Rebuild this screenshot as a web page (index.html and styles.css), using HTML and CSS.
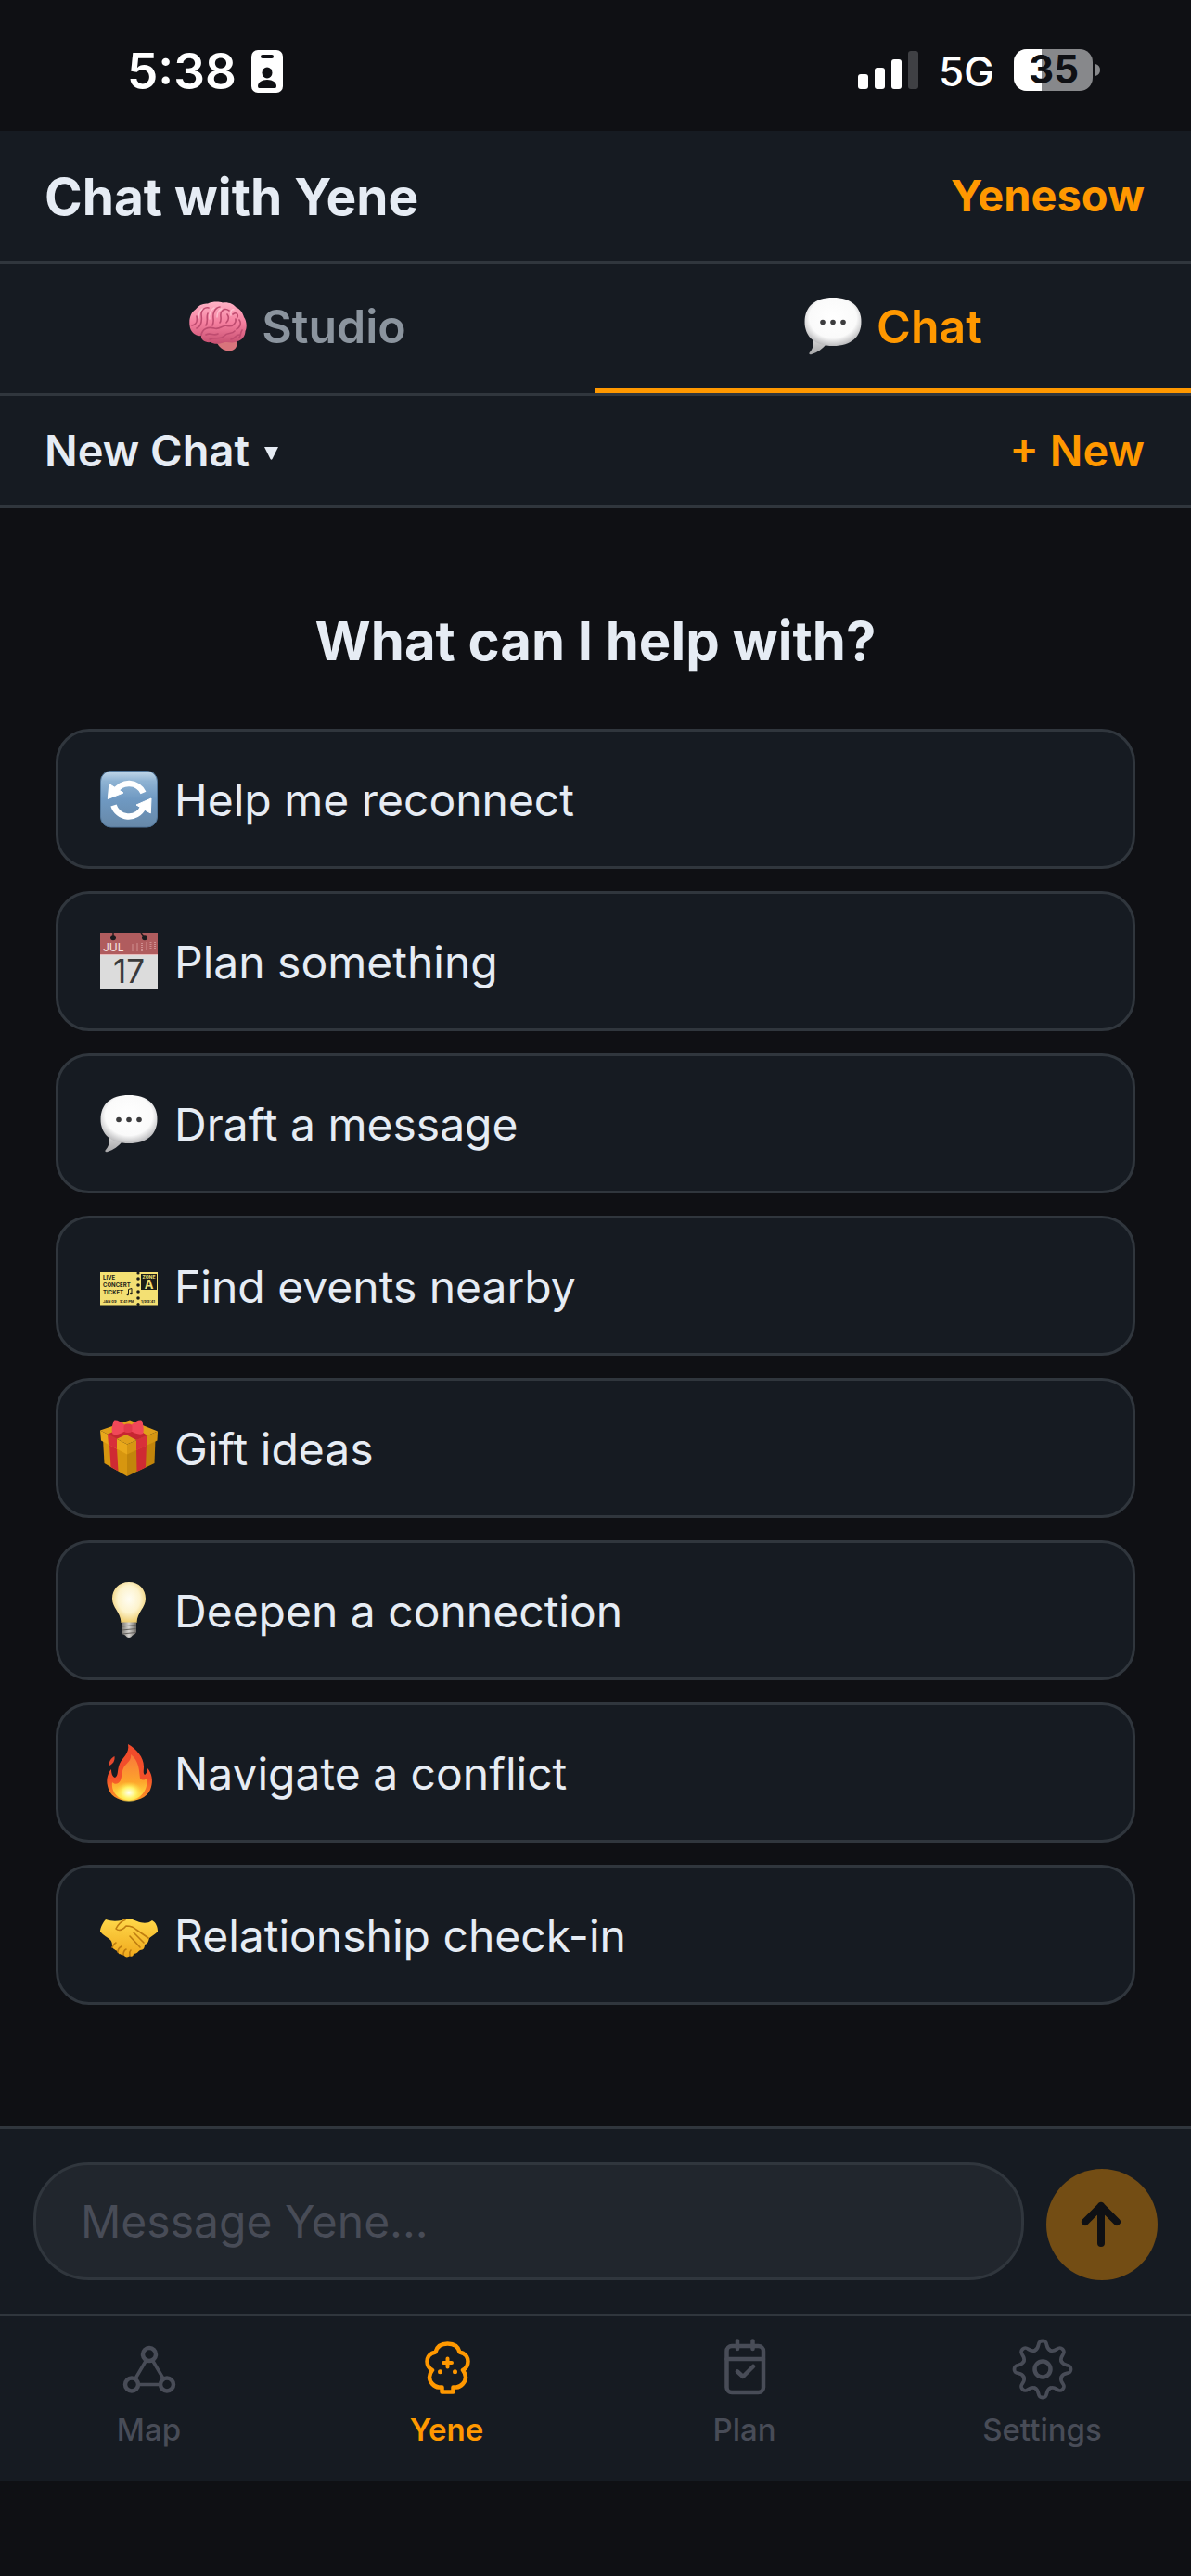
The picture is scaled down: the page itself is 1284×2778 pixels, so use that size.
FILE: index.html
```html
<!DOCTYPE html>
<html lang="en">
<head>
<meta charset="utf-8">
<meta name="viewport" content="width=device-width, initial-scale=1">
<title>Chat with Yene</title>
<link rel="stylesheet" href="styles.css">
</head>
<body>
<svg class="defs" aria-hidden="true">
  <defs>
    <radialGradient id="bubbleFill" cx="50%" cy="42%" r="58%">
      <stop offset="0" stop-color="#ffffff"/><stop offset=".72" stop-color="#fafafa"/><stop offset="1" stop-color="#bdbdbf"/>
    </radialGradient>
    <linearGradient id="tailFill" x1="0" y1="0" x2="0" y2="1">
      <stop offset="0" stop-color="#dadada"/><stop offset="1" stop-color="#a6a6a8"/>
    </linearGradient>
    <symbol id="bubble" viewBox="0 0 62 62">
      <path d="M9 43 C11 51 9 56 5.500 59.500 C5 61 6 61.500 8 61 C14 59 20 55 24 50 Z" fill="url(#tailFill)"/>
      <path d="M31 0 C51 0 61.500 10 61.500 26 C61.500 42 51 52 31 52 C11 52 .5 42 .5 26 C.5 10 11 0 31 0 Z" fill="url(#bubbleFill)"/>
      <g fill="#3c3c3e"><circle cx="20" cy="26.500" r="2.800"/><circle cx="31" cy="26.500" r="2.800"/><circle cx="42" cy="26.500" r="2.800"/></g>
    </symbol>
  </defs>
</svg>
<div class="app">
  <div class="status">
    <div class="status-side">
      <span class="clock">5:38</span>
      <svg width="34" height="46" viewBox="0 0 34 46" aria-hidden="true">
        <rect width="34" height="46" rx="7" fill="#fff"/>
        <rect x="10" y="5" width="14" height="4" rx="2" fill="#0f1014"/>
        <ellipse cx="17" cy="24.500" rx="5.500" ry="6" fill="#0f1014"/>
        <path d="M7 39 C7 35 11 32 17 32 C23 32 27 35 27 39 Q27 41 25.500 41 H8.500 Q7 41 7 39 Z" fill="#0f1014"/>
      </svg>
    </div>
    <div class="status-side status-right">
      <svg width="66" height="46" viewBox="0 0 66 46" aria-hidden="true">
        <g fill="#fff"><rect y="26" width="11" height="16" rx="3"/><rect x="18" y="19" width="11" height="23" rx="3"/><rect x="36" y="10" width="11" height="32" rx="3"/></g>
        <rect x="54" y="1" width="11" height="41" rx="3" fill="#3f4044"/>
      </svg>
      <span class="network">5G</span>
      <svg width="93" height="48" viewBox="0 0 93 48" role="img" aria-label="Battery 35 percent">
        <clipPath id="level"><rect width="30" height="48"/></clipPath>
        <rect width="85" height="45" rx="14" fill="#87888b"/>
        <rect width="85" height="45" rx="14" fill="#fff" clip-path="url(#level)"/>
        <path d="M88 16 C91.500 17 93 19.500 93 22.500 C93 25.500 91.500 28 88 29 Z" fill="#87888b"/>
        <text class="battery-text" x="43" y="37" text-anchor="middle">35</text>
      </svg>
    </div>
  </div>

  <header class="bar header">
    <h1 class="title">Chat with Yene</h1>
    <button class="plain accent name" type="button">Yenesow</button>
  </header>

  <div class="tabs" role="tablist">
    <button class="tab" type="button" role="tab" aria-selected="false">
      <svg class="emoji" viewBox="0 0 62 62" aria-hidden="true">
        <defs><linearGradient id="brain" x1="0" y1="0" x2="0" y2="1"><stop offset="0" stop-color="#ffb3c6"/><stop offset=".5" stop-color="#f57f9f"/><stop offset="1" stop-color="#c64f70"/></linearGradient></defs>
        <path d="M28 46 L48 44 C53 47 52 54 48 56 C43 59 36 57 32 52 Z" fill="#d9747c"/>
        <path d="M0.500 30 C-.5 22 2 16 7 12.500 C10 8 15 6 20 6.500 C25 4 32 4 36 5.500 C42 4.500 48 7 50.500 10.500 C55 12 58 17 59 21 C62 25 62.500 32 60.500 36 C60.500 41 57 46 52 47 C47 50 42 47 37 48.500 C31 50.500 26 50 23 48 C17 49 12 45 13 41 C7 42 1 37 .5 30 Z" fill="url(#brain)"/>
        <g fill="none" stroke="#bf4c70" stroke-width="1.600" stroke-linecap="round">
          <path d="M13 40.500 C14 34 20 31 27 33 C33 35 36 29 41 30.500 C47 32 51 27 50 23"/>
          <path d="M3 30 C8 29 9 25 8 20 M8 33 C13 31 14 25 13 18 C13 13 17 10 21 11 M18 30 C21 25 18 21 20 17 M25 30 C28 25 24 20 27 15 C28 12 31 10 33 10 M33 27 C36 23 32 18 35 15 C37 12 40 12 43 14 M40 27 C43 24 43 21 41 18 M47 18 C51 15 53 18 52 21 M54 24 C57 28 54 33 51 34 M18 40 C23 37 26 42 31 39 M22 45 C28 42 33 46 38 41 C41 37 46 40 49 36 M45 45 C50 44 50 40 54 40 M57 35 C55 38 56 40 54 43"/>
        </g>
        <g fill="none" stroke="#ffd0dc" stroke-width="1.400" stroke-linecap="round" opacity=".7"><path d="M10 22 C10 17 12 14 14 12 M22 23 C21 18 23 13 27 11 M30 21 C30 17 32 13 35 12 M45 19 C44 15 46 12 48 13"/></g>
      </svg>
      <span>Studio</span>
    </button>
    <button class="tab tab-active" type="button" role="tab" aria-selected="true">
      <svg class="emoji" aria-hidden="true"><use href="#bubble"/></svg>
      <span>Chat</span>
    </button>
  </div>

  <div class="bar thread">
    <button class="plain thread-pick" type="button" aria-haspopup="listbox">
      <span>New Chat</span>
      <svg width="15" height="22" viewBox="0 0 15 22" aria-hidden="true"><path d="M0 8 H15 L8.500 21 Q7.500 22.500 6.500 21 Z" fill="currentColor"/></svg>
    </button>
    <button class="plain accent" type="button">+ New</button>
  </div>

  <main class="main">
    <h2 class="heading">What can I help with?</h2>
    <ul class="list">
      <li><button class="card" type="button">
        <svg class="emoji" viewBox="0 0 62 62" aria-hidden="true">
          <defs><linearGradient id="sync" x1="0" y1="0" x2="0" y2="1"><stop offset="0" stop-color="#c4d9ea"/><stop offset=".18" stop-color="#8fb3d3"/><stop offset=".5" stop-color="#6f99c2"/><stop offset="1" stop-color="#6788a8"/></linearGradient></defs>
          <rect x=".5" y=".5" width="61" height="60.500" rx="11" fill="url(#sync)" stroke="#52779b"/>
          <g fill="none" stroke="#fff" stroke-width="6.500"><path d="M46.500 24 A17 17 0 0 0 16 23"/><path d="M14.500 37.500 A17 17 0 0 0 46 40"/></g>
          <path d="M8.300 30.500 L9.800 14.500 L25 24 Z M55 30 L54.300 46 L39 37 Z" fill="#fff" stroke="#fff" stroke-linejoin="round"/>
        </svg>
        <span>Help me reconnect</span>
      </button></li>
      <li><button class="card" type="button">
        <svg class="emoji" viewBox="0 0 62 62" aria-hidden="true">
          <rect width="62" height="61" fill="#dcdcdc"/><rect width="62" height="23" fill="#b05c5e"/><rect y="23" width="62" height="1" fill="#e9b9b9"/>
          <path d="M14 0 V5 M44 0 L48 5" stroke="#2a1c1e" stroke-width="1.500"/>
          <circle cx="14" cy="5.300" r="3" fill="#1c1a1d"/><circle cx="48" cy="5.300" r="3" fill="#1c1a1d"/>
          <path d="M35 12.500 V20 M40 11.500 V20 M45 11 V20 M50 10.500 V19 M54.500 10 V17 M59 10 V17" stroke="#cf8f90" stroke-width="2" stroke-dasharray="1 1"/>
          <text x="3" y="19.500" font-size="12" fill="#f6e4e4">JUL</text>
          <text x="31" y="54" font-size="35" text-anchor="middle" fill="#3a3a3a">17</text>
        </svg>
        <span>Plan something</span>
      </button></li>
      <li><button class="card" type="button">
        <svg class="emoji" aria-hidden="true"><use href="#bubble"/></svg>
        <span>Draft a message</span>
      </button></li>
      <li><button class="card" type="button">
        <svg class="emoji" viewBox="0 0 62 62" aria-hidden="true">
          <rect y="16" width="62" height="35.500" fill="#f3e073"/>
          <g fill="#1c1d18"><circle cx="41" cy="17" r="1.600"/><circle cx="41" cy="23" r="1.800"/><circle cx="41" cy="30" r="1.800"/><circle cx="41" cy="37" r="1.800"/><circle cx="41" cy="44" r="1.800"/><circle cx="41" cy="50.500" r="1.600"/><rect x="44" y="18" width="17" height="17"/></g>
          <g font-weight="700" fill="#1c1d18">
            <text x="3" y="24" font-size="6">LIVE</text><text x="3" y="32" font-size="6">CONCERT</text><text x="3" y="40" font-size="6">TICKET</text>
            <text x="3" y="49" font-size="4">JAN 09</text><text x="21" y="49" font-size="4">9:41 PM</text><text x="44" y="49" font-size="4">1/9 9:41</text>
          </g>
          <path d="M30.500 40 V34.500 L34 33.500 V39" fill="none" stroke="#1c1d18"/><circle cx="29.700" cy="40" r="1.200" fill="#1c1d18"/><circle cx="33.200" cy="39" r="1.200" fill="#1c1d18"/>
          <g font-weight="700" fill="#f3e073" text-anchor="middle"><text x="52.500" y="23" font-size="5">ZONE</text><text x="52.500" y="34" font-size="13">A</text></g>
        </svg>
        <span>Find events nearby</span>
      </button></li>
      <li><button class="card" type="button">
        <svg class="emoji" viewBox="0 0 62 62" aria-hidden="true">
          <path d="M3 21 L29 35 V61 L4.500 47 Z" fill="#d7960f"/><path d="M29 35 L59.500 21 L58.500 47 L29 61 Z" fill="#c2850b"/>
          <path d="M10 27 L18 31 L19.500 55.500 L11.500 51 Z M39 31 L50 26 L49 51.500 L39.500 56 Z" fill="#cf2a33"/>
          <path d="M0 11.500 L29 26.500 V37.500 L1 22.500 Z" fill="#e9a91b"/><path d="M29 26.500 L62 12.500 L61.500 22.500 L29 37.500 Z" fill="#d69612"/>
          <path d="M0 11.500 L32 0.500 L62 12.500 L29 26.500 Z" fill="#e0a01a"/>
          <path d="M8 15.500 L18 20.800 V31.500 L9 27 Z M39 22 L51 17 V27.500 L39 33 Z" fill="#d8303a"/>
          <path d="M8 15.500 L24 9 L34 13 L18 20.800 Z M39 22 L26 15 L38 9 L51 17 Z" fill="#c62631"/>
          <path d="M27 6 C21 1 15 -1 14.500 2 C12.500 7 12 12 13.500 15.500 C18 18 23 14 28 12 Z M33 6 C39 1 44 -1 45.500 2 C46.500 7 47.500 12 46 15 C42 17 37 14 32 12 Z" fill="#f04858"/>
          <rect x="25.500" y="4.500" width="9" height="9.500" rx="3.500" fill="#e23a4b"/>
        </svg>
        <span>Gift ideas</span>
      </button></li>
      <li><button class="card" type="button">
        <svg class="emoji" viewBox="0 0 62 62" aria-hidden="true">
          <defs>
            <radialGradient id="bulb" cx="50%" cy="42%" r="60%"><stop offset="0" stop-color="#fffdf3"/><stop offset=".55" stop-color="#fdf3cd"/><stop offset="1" stop-color="#edc967"/></radialGradient>
            <linearGradient id="cap"><stop offset="0" stop-color="#77746f"/><stop offset=".5" stop-color="#d5d3cf"/><stop offset="1" stop-color="#6c6965"/></linearGradient>
          </defs>
          <path d="M31 0 C42 0 49 8 49 18 C49 28 40 32 39.500 44 H22.500 C22 32 13 28 13 18 C13 8 20 0 31 0 Z" fill="url(#bulb)"/>
          <path d="M23 43.500 H39 V54 Q38 57 35 57.500 Q33 60 31 60 Q29 60 27 57.500 Q24 57 23 54 Z" fill="url(#cap)"/>
          <path d="M23 48 L39 46.500 M23 52 L39 50.500 M24 56 L38 54.500" stroke="#65625e" stroke-width="1.200"/>
        </svg>
        <span>Deepen a connection</span>
      </button></li>
      <li><button class="card" type="button">
        <svg class="emoji" viewBox="0 0 62 62" aria-hidden="true">
          <defs>
            <linearGradient id="flame" x1="0" y1="0" x2="0" y2="1"><stop offset="0" stop-color="#f04a2c"/><stop offset=".6" stop-color="#f4502a"/><stop offset="1" stop-color="#fb9a25"/></linearGradient>
            <linearGradient id="flameMid" x1="0" y1="0" x2="0" y2="1"><stop offset="0" stop-color="#f9783a"/><stop offset=".6" stop-color="#fda52c"/><stop offset="1" stop-color="#fff04a"/></linearGradient>
            <radialGradient id="flameCore" cy="60%"><stop offset="0" stop-color="#fffff0"/><stop offset=".5" stop-color="#fff36a"/><stop offset="1" stop-color="#ffd43a" stop-opacity="0"/></radialGradient>
          </defs>
          <path d="M30 0 C39 5 47 14 47 24 C47 29 46 31 48 33 C51 31 51 28 51 26 C56 31 57 40 55 46 C53 55 44 61 31 61 C18 61 10 55 8 45 C6 37 9 30 12 27 C12 31 13 35 16 36 C20 34 18 28 21 21 C24 14 32 10 30 0 Z" fill="url(#flame)"/>
          <path d="M10 23 C9 18 12 15 15.500 13 C16 18 14 21 10 23 Z" fill="#e4472e"/>
          <path d="M33 11 C42 18 42 28 43 37 C46 40 49 38 50 37 C52 46 47 59 31 60.500 C16 59 12 49 13 41 C16 44 20 43 22 39 C24 33 23 29 26 24 C30 19 34 17 33 11 Z" fill="url(#flameMid)"/>
          <ellipse cx="31" cy="50" rx="15" ry="12" fill="url(#flameCore)"/>
        </svg>
        <span>Navigate a conflict</span>
      </button></li>
      <li><button class="card" type="button">
        <svg class="emoji" viewBox="0 0 62 62" aria-hidden="true">
          <defs><linearGradient id="hand" x1="0" y1="0" x2="0" y2="1"><stop offset="0" stop-color="#ffd84a"/><stop offset="1" stop-color="#f0a91c"/></linearGradient></defs>
          <path d="M6 14 C3 17 0 23 0 27 C3 31 8 33 11 36 C13 38 13 41 13 44 C15 47 18 47 19 49 C20 52 23 52 25 52 C27 55 30 55 32 53 C34 55 36 53 36 51 C40 51 41 48 43 47 C47 47 48 44 48 41 C52 40 52 37 53 34 C56 32 60 29 62 27 C62 22 60 17 56 15 C51 19 45 18 40 16 C34 13 28 12 23 15 C17 16 12 16 6 14 Z" fill="url(#hand)"/>
          <g fill="none" stroke="#bf7d10" stroke-width="1.600" stroke-linecap="round" stroke-linejoin="round">
            <path d="M27 14.500 C22 16 19 20 17 24 C20 27 25 25 28 21 C32 21 36 22 39 25 L52 34 M36 28 L47 39 M32 32 L43 44 M13 44 C14 41 15 40 17 39 M19 49 C19 46 21 44 23 43 M25 52 C25 49 26 47 28 46 M32 53 C32 51 31 49 33 47"/>
          </g>
        </svg>
        <span>Relationship check-in</span>
      </button></li>
    </ul>
  </main>

  <form class="composer">
    <input class="field" type="text" aria-label="Message Yene" placeholder="Message Yene...">
    <button class="send" type="button" aria-label="Send">
      <svg width="120" height="120" viewBox="0 0 120 120" fill="none" stroke="#0f1014" stroke-width="8" stroke-linecap="round" stroke-linejoin="round" aria-hidden="true"><path d="M59 80 V40 M42 57 L59 40 L76 57"/></svg>
    </button>
  </form>

  <nav class="nav" aria-label="Main">
    <a class="nav-item" href="#map">
      <svg class="nav-icon" viewBox="0 0 72 72" aria-hidden="true"><g stroke-width="4.500"><circle cx="36" cy="20" r="7"/><circle cx="17" cy="52.500" r="7"/><circle cx="55" cy="52.500" r="7"/></g><path stroke-width="3.500" d="M32.500 26.500 L21 46 M39.500 26.500 L51 46 M24.500 52.500 H47.500"/></svg>
      <span>Map</span>
    </a>
    <a class="nav-item nav-active" href="#yene" aria-current="page">
      <svg class="nav-icon" viewBox="0 0 72 72" aria-hidden="true"><path stroke-width="4.500" d="M23.500 17.500 C25 11.500 30 8.500 36.500 8.500 C43 8.500 48 11.500 49.500 17.500 C55 18.500 58.500 22.500 58.500 27.500 C58.500 31.500 56.500 35 53 37 C54.500 39 56 41.500 56 44.500 C56 50 51 55 46 55.500 H42.500 V60.500 H30.500 V55.500 H27 C22 55 17 50 17 44.500 C17 41.500 18.500 39 20 37 C16.500 35 14.500 31.500 14.500 27.500 C14.500 22.500 18 18.500 23.500 17.500 Z"/><path stroke-width="4" d="M36.500 24.500 V33.500 M32 29 H41"/><g fill="currentColor" stroke="none"><circle cx="28.500" cy="38.700" r="2.500"/><circle cx="44.500" cy="38.700" r="2.500"/></g></svg>
      <span>Yene</span>
    </a>
    <a class="nav-item" href="#plan">
      <svg class="nav-icon" viewBox="0 0 72 72" aria-hidden="true"><g stroke-width="4.500"><rect x="16.500" y="11" width="39.500" height="50" rx="5.500"/><path d="M16.500 25 H56 M28 5.500 V14 M44.500 5.500 V14 M28 38.500 L34 44 L45 33"/></g></svg>
      <span>Plan</span>
    </a>
    <a class="nav-item" href="#settings">
      <svg class="nav-icon" viewBox="0 0 72 72" aria-hidden="true">
        <defs><path id="tooth" d="M27.600 15.700 C34 13 29 5.500 36 5.500 C43 5.500 38 13 44.400 15.700"/></defs>
        <g stroke-width="3.800"><use href="#tooth"/><use href="#tooth" transform="rotate(45 36 36)"/><use href="#tooth" transform="rotate(90 36 36)"/><use href="#tooth" transform="rotate(135 36 36)"/><use href="#tooth" transform="rotate(180 36 36)"/><use href="#tooth" transform="rotate(225 36 36)"/><use href="#tooth" transform="rotate(270 36 36)"/><use href="#tooth" transform="rotate(315 36 36)"/></g>
        <circle cx="36" cy="36" r="8.500" stroke-width="4.500"/>
      </svg>
      <span>Settings</span>
    </a>
  </nav>
</div>
</body>
</html>
```

FILE: styles.css
```css
:root {
  --bg: #0f1014;
  --panel: #161b22;
  --line: #30363d;
  --text: #e6ecf4;
  --muted: #8b949e;
  --faint: #484c57;
  --accent: #ff9800;
}

* { box-sizing: border-box; }

body {
  margin: 0;
  background: var(--bg);
  color: var(--text);
  font-family: "Inter", "Noto Sans", sans-serif;
}

button {
  margin: 0;
  padding: 0;
  border: 0;
  background: none;
  color: inherit;
  font: inherit;
  cursor: pointer;
}

svg { display: block; flex: none; }

.defs { position: absolute; width: 0; height: 0; }

.app {
  display: flex;
  flex-direction: column;
  min-height: 100vh;
  padding-bottom: 102px;
}

/* Status bar */
.status {
  display: flex;
  justify-content: space-between;
  padding: 53px 98px 40px 137px;
  color: #fff;
}
.status-side {
  display: flex;
  align-items: center;
  gap: 16px;
  height: 48px;
}
.status-right { gap: 21px; }
.clock { font-size: 53px; font-weight: 600; }
.network { font-size: 44px; font-weight: 500; }
.battery-text { font-size: 42px; font-weight: 700; fill: var(--bg); }

/* Header rows */
.bar {
  display: flex;
  align-items: center;
  justify-content: space-between;
  padding: 0 50px 0 48px;
  background: var(--panel);
  border-bottom: 3px solid var(--line);
}
.header { height: 144px; }
.title { margin: 0; font-size: 55px; font-weight: 700; }
.plain { padding-bottom: 2px; }
.accent { color: var(--accent); }
.name { font-size: 47px; font-weight: 700; }
.thread { height: 121px; font-size: 47px; font-weight: 600; }
.thread-pick { display: flex; align-items: center; gap: 16px; }

.tabs {
  display: flex;
  background: var(--panel);
  border-bottom: 3px solid var(--line);
}
.tab {
  flex: 1;
  display: flex;
  align-items: center;
  justify-content: center;
  gap: 16px;
  height: 139px;
  border-bottom: 6px solid transparent;
  color: var(--muted);
  font-size: 50px;
  font-weight: 600;
}
.tab-active { border-bottom-color: var(--accent); color: var(--accent); }

.emoji { width: 62px; height: 62px; }

/* Suggestions */
.main { flex: 1; padding: 109px 60px; }
.heading {
  margin: 0 0 61px;
  font-size: 58px;
  font-weight: 700;
  line-height: 68px;
  text-align: center;
}
.list {
  display: flex;
  flex-direction: column;
  gap: 24px;
  margin: 0;
  padding: 0;
  list-style: none;
}
.card {
  display: flex;
  align-items: center;
  gap: 18px;
  width: 100%;
  padding: 42px 45px 41px;
  border: 3px solid var(--line);
  border-radius: 36px;
  background: var(--panel);
  font-size: 48px;
  line-height: 61px;
  text-align: left;
}

/* Composer */
.composer {
  display: flex;
  align-items: flex-end;
  gap: 24px;
  padding: 36px;
  background: var(--panel);
  border-top: 3px solid var(--line);
}
.field {
  flex: 1;
  min-width: 0;
  height: 127px;
  padding: 0 48px;
  border: 3px solid var(--line);
  border-radius: 60px;
  background: #21262d;
  color: var(--text);
  font: 400 48px "Inter", "Noto Sans", sans-serif;
}
.field::placeholder { color: var(--faint); opacity: 1; }
.send {
  width: 120px;
  height: 120px;
  border-radius: 50%;
  background: #734d14;
}

/* Bottom navigation */
.nav {
  display: flex;
  background: var(--panel);
  border-top: 3px solid var(--line);
}
.nav-item {
  flex: 1;
  display: flex;
  flex-direction: column;
  align-items: center;
  gap: 9px;
  padding: 21px 0 36px;
  color: var(--faint);
  font-size: 33px;
  font-weight: 500;
  line-height: 40px;
  text-decoration: none;
}
.nav-active { color: var(--accent); font-weight: 600; }
.nav-icon {
  width: 72px;
  height: 72px;
  fill: none;
  stroke: currentColor;
  stroke-linecap: round;
  stroke-linejoin: round;
}
```
